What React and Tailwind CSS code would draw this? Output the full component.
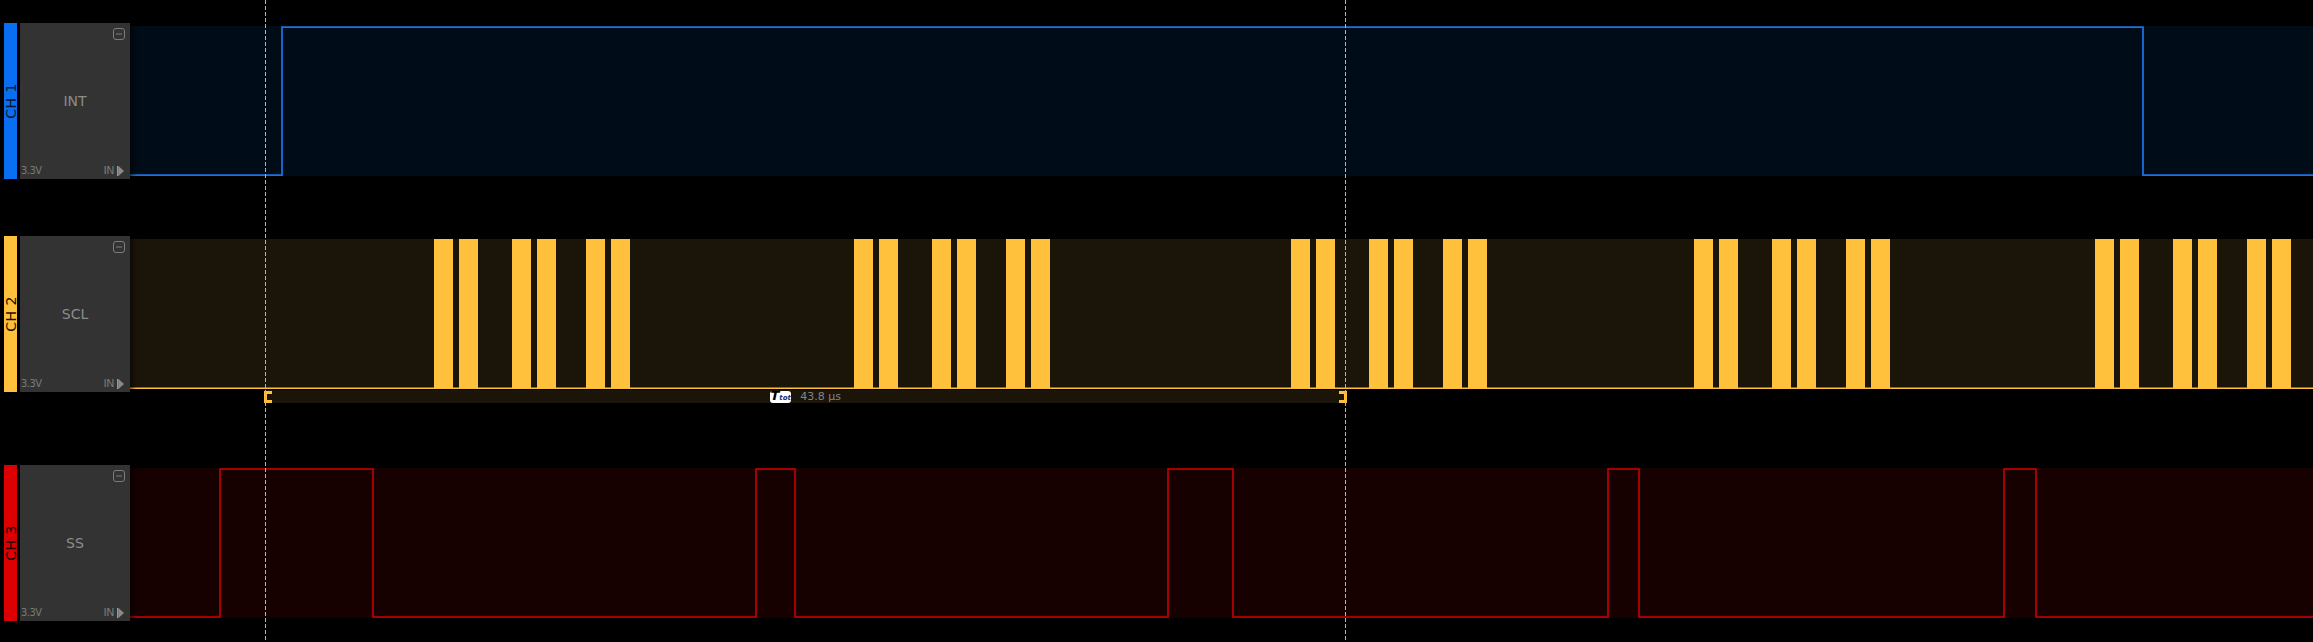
const PLOT_W = 2183
const PLOT_H = 150

// offsets of one SCL burst (6 clock pulses), relative to the burst start
const BURST = [0, 25, 78, 103, 152, 177]
const BURST_STARTS = [304, 724, 1161, 1564, 1965]

const INT_EDGES = [152, 2013]
const SS_EDGES = [90, 243, 626, 665, 1038, 1103, 1478, 1509, 1874, 1906]

function squareWave(edges, startHigh = false) {
  const hi = 1
  const lo = PLOT_H - 1
  let level = startHigh ? hi : lo
  const pts = [`0,${level}`]
  edges.forEach((x) => {
    pts.push(`${x},${level}`)
    level = level === hi ? lo : hi
    pts.push(`${x},${level}`)
  })
  pts.push(`${PLOT_W},${level}`)
  return pts.join(' ')
}

function CollapseIcon() {
  return (
    <svg width="12" height="12" viewBox="0 0 12 12">
      <rect x="0.5" y="0.5" width="11" height="11" rx="2.5" fill="none" stroke="#7c7c7c" />
      <line x1="3" y1="6" x2="9" y2="6" stroke="#7c7c7c" />
    </svg>
  )
}

function InArrow() {
  return (
    <svg width="7" height="10" viewBox="0 0 7 10">
      <rect x="0" y="0" width="1.5" height="10" fill="#9a9a9a" />
      <polygon points="1.5,0 7,5 1.5,10" fill="#8a8a8a" />
    </svg>
  )
}

function ChannelPanel({ name, label, barClass, labelClass }) {
  return (
    <div className="flex h-full">
      <div className={`w-[13px] flex items-center justify-center ${barClass}`}>
        <span className={`[writing-mode:vertical-rl] rotate-180 text-[14px] leading-none tracking-[0.5px] ${labelClass}`}>
          {name}
        </span>
      </div>
      <div className="ml-[3px] w-[110px] bg-[#333333] flex flex-col relative z-10 shadow-[3px_0_5px_rgba(0,0,0,0.55)]">
        <div className="flex justify-end pt-[5px] pr-[5px]">
          <CollapseIcon />
        </div>
        <div className="flex-1 flex items-center justify-center text-[14px] text-[#8c8c8c] pb-[3px]">{label}</div>
        <div className="flex items-end justify-between pl-[1px] pr-[6px] pb-[3px] text-[11px] leading-none text-[#7a7a7a]">
          <span className="[font-stretch:condensed] tracking-[-0.5px]">3.3V</span>
          <span className="flex items-end gap-[3px]">
            <span className="tracking-[-0.5px]">IN</span>
            <InArrow />
          </span>
        </div>
      </div>
    </div>
  )
}

function Channel({ name, label, barClass, labelClass, plotClass, children }) {
  return (
    <div className="flex h-[156px] pl-[4px]">
      <ChannelPanel name={name} label={label} barClass={barClass} labelClass={labelClass} />
      <div className={`flex-1 my-[3px] ${plotClass}`}>
        <svg width={PLOT_W} height={PLOT_H} viewBox={`0 0 ${PLOT_W} ${PLOT_H}`} className="block">
          {children}
        </svg>
      </div>
    </div>
  )
}

function Cursor({ className }) {
  return (
    <svg width="3" height="642" className={`absolute top-0 z-20 ${className}`}>
      <line x1="1.5" y1="0" x2="1.5" y2="642" stroke="#b4b4b4" strokeWidth="1" strokeDasharray="4 2" />
    </svg>
  )
}

function Bracket({ flip }) {
  return (
    <svg width="8" height="12" viewBox="0 0 8 12" className={flip ? '-scale-x-100' : ''}>
      <path d="M0 0H8V3H3V9H8V12H0Z" fill="#ffc13b" />
    </svg>
  )
}

function Measurement() {
  return (
    <div className="absolute left-[264px] top-[390px] w-[1083px] h-[13px] bg-[#1b1409] flex items-center justify-between z-10">
      <Bracket />
      <div className="flex items-center gap-[9px]">
        <span className="bg-white rounded-[3px] h-[12px] w-[21px] flex items-end justify-center pb-[1px] leading-none">
          <span className="italic font-bold text-[13px] text-black">T</span>
          <span className="italic font-bold text-[7px] text-[#0d2f6e]">tot</span>
        </span>
        <span className="text-[11px] text-[#858585] leading-none">43.8 µs</span>
      </div>
      <Bracket flip />
    </div>
  )
}

export default function App() {
  return (
    <div className="relative w-[2313px] h-[642px] bg-black overflow-hidden font-['DejaVu_Sans','Liberation_Sans',sans-serif]">
      <div className="flex flex-col pt-[23px]">
        <Channel
          name="CH 1"
          label="INT"
          barClass="bg-[#0a6ef2]"
          labelClass="text-[#031634]"
          plotClass="bg-[#000c17]"
        >
          <polyline points={squareWave(INT_EDGES)} fill="none" stroke="#1872e6" strokeWidth="1.75" />
        </Channel>

        <div className="mt-[57px]">
          <Channel
            name="CH 2"
            label="SCL"
            barClass="bg-[#ffc13b]"
            labelClass="text-[#1c1400]"
            plotClass="bg-[#1b1409]"
          >
            {BURST_STARTS.flatMap((start) =>
              BURST.map((off) => (
                <rect key={`${start}-${off}`} x={start + off} y="0" width="19" height={PLOT_H} fill="#ffc13b" />
              ))
            )}
            <line x1="0" y1="149.3" x2={PLOT_W} y2="149.3" stroke="#ffc13b" strokeWidth="1.4" />
          </Channel>
        </div>

        <div className="mt-[73px]">
          <Channel
            name="CH 3"
            label="SS"
            barClass="bg-[#dc0000]"
            labelClass="text-[#200000]"
            plotClass="bg-[#160000]"
          >
            <polyline points={squareWave(SS_EDGES)} fill="none" stroke="#d40000" strokeWidth="1.5" />
          </Channel>
        </div>
      </div>

      <Measurement />
      <Cursor className="left-[264px]" />
      <Cursor className="left-[1344px]" />
    </div>
  )
}
